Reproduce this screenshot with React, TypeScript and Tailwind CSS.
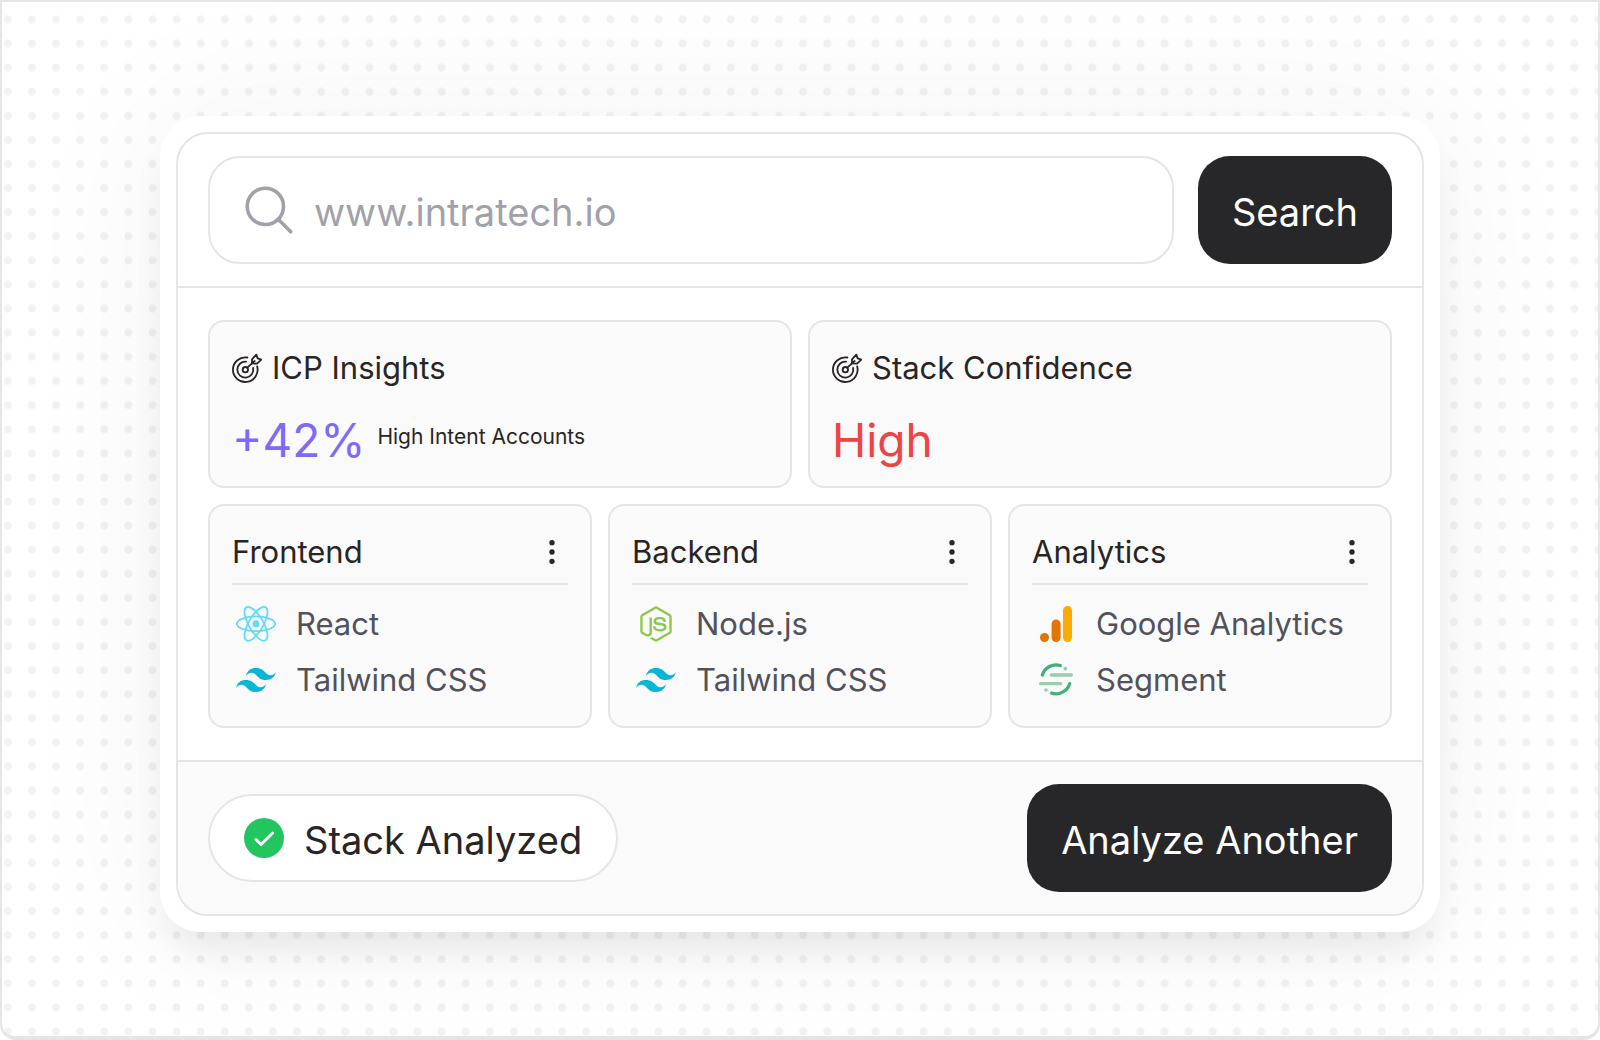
import React from 'react';
import { EllipsisVertical } from 'lucide-react';
import { FaNodeJs } from 'react-icons/fa';
import { SiTailwindcss } from 'react-icons/si';

const SearchIcon = () => (
  <svg viewBox="0 0 24 24" fill="none" stroke="currentColor" strokeWidth="1.5" strokeLinecap="round" className="size-[58px] shrink-0 text-[#a1a1aa]" aria-hidden="true">
    <circle cx="10.5" cy="10.5" r="7.5" />
    <path d="m21 21-5.2-5.2" />
  </svg>
);

const TargetIcon = () => (
  <svg viewBox="0 0 90 90" fill="none" stroke="currentColor" strokeWidth="5.5" strokeLinecap="round" strokeLinejoin="round" className="size-[30px] shrink-0" aria-hidden="true">
    <path d="M46 13.5A37 37 0 1 0 75.5 40" />
    <path d="M42 26A24 24 0 1 0 63.5 45" />
    <circle cx="40" cy="50" r="8" />
    <path d="M46 44 60 31" />
    <path d="M60 31V19L73 5l4 11 11 4-13 12Z" />
    <path d="m60 31 8-7" />
  </svg>
);

const ReactLogo = () => (
  <svg viewBox="-11.5 -10.23 23 20.46" className="w-10" aria-hidden="true">
    <circle r="2.05" fill="#61dafb" />
    <g stroke="#61dafb" fill="none">
      <ellipse rx="11" ry="4.2" />
      <ellipse rx="11" ry="4.2" transform="rotate(60)" />
      <ellipse rx="11" ry="4.2" transform="rotate(120)" />
    </g>
  </svg>
);

const GoogleAnalyticsLogo = () => (
  <svg viewBox="0 0 32 36" className="h-9" aria-hidden="true">
    <rect x="23" width="9" height="36" rx="4.5" fill="#f9ab00" />
    <rect x="11.6" y="13.4" width="9" height="22.6" rx="4.5" fill="#e37400" />
    <circle cx="4.5" cy="31.5" r="4.5" fill="#e37400" />
  </svg>
);

const SegmentLogo = () => (
  <svg viewBox="0 0 120 120" fill="none" strokeWidth="10" strokeLinecap="round" className="size-10" aria-hidden="true">
    <path d="M19 45A43.5 43.5 0 0 1 73 16.5" stroke="#43af79" />
    <path d="M101 71A43.5 43.5 0 0 1 47 99.5" stroke="#43af79" />
    <path d="M46 45h60M14 71h60" stroke="#99cdab" />
    <circle cx="88" cy="26" r="5.5" fill="#99cdab" />
    <circle cx="30" cy="90" r="5.5" fill="#99cdab" />
  </svg>
);

const CheckBadge = () => (
  <svg viewBox="0 0 40 40" fill="none" className="size-10 shrink-0" aria-hidden="true">
    <circle cx="20" cy="20" r="20" fill="#22c55e" />
    <path d="m12 21.5 5 5L28.5 15" stroke="#fff" strokeWidth="3" strokeLinecap="round" strokeLinejoin="round" />
  </svg>
);

const TailwindLogo = () => <SiTailwindcss className="size-10 text-[#06b6d4]" />;
const NodeLogo = () => <FaNodeJs className="size-9 text-[#8cc84b]" />;

const STACKS = [
  {
    title: 'Frontend',
    items: [
      { name: 'React', Logo: ReactLogo },
      { name: 'Tailwind CSS', Logo: TailwindLogo },
    ],
  },
  {
    title: 'Backend',
    items: [
      { name: 'Node.js', Logo: NodeLogo },
      { name: 'Tailwind CSS', Logo: TailwindLogo },
    ],
  },
  {
    title: 'Analytics',
    items: [
      { name: 'Google Analytics', Logo: GoogleAnalyticsLogo },
      { name: 'Segment', Logo: SegmentLogo },
    ],
  },
];

const DotGrid = () => (
  <svg className="absolute inset-0 size-full" aria-hidden="true">
    <defs>
      <pattern id="dots" x="-6.2" y="5.3" width="24.1" height="24.1" patternUnits="userSpaceOnUse">
        <circle cx="12.05" cy="12.05" r="4" fill="#f2f2f2" />
      </pattern>
    </defs>
    <rect width="100%" height="100%" fill="url(#dots)" />
  </svg>
);

const InsightCard: React.FC<{ title: string; children: React.ReactNode }> = ({ title, children }) => (
  <section className="flex-1 rounded-2xl border-2 border-[#e5e5e5] bg-neutral-50 p-[22px]">
    <h2 className="flex items-center gap-2.5 text-[31px] leading-[48px]">
      <TargetIcon />
      {title}
    </h2>
    <div className="mt-6 flex items-start gap-3">{children}</div>
  </section>
);

const StackCard: React.FC<(typeof STACKS)[number]> = ({ title, items }) => (
  <section className="rounded-2xl border-2 border-[#e5e5e5] bg-neutral-50 p-[22px]">
    <div className="flex items-center justify-between border-b-2 border-[#e5e5e5] pb-[7px]">
      <h2 className="text-[31px] leading-[48px]">{title}</h2>
      <button type="button" aria-label={`${title} options`}>
        <EllipsisVertical size={32} />
      </button>
    </div>
    <ul className="mt-[15px] space-y-2 px-1 text-[31px] leading-[48px] text-[#52525b]">
      {items.map(({ name, Logo }) => (
        <li key={name} className="flex items-center gap-5 whitespace-nowrap">
          <span className="flex w-10 shrink-0 justify-center">
            <Logo />
          </span>
          {name}
        </li>
      ))}
    </ul>
  </section>
);

export default function App() {
  return (
    <div className="min-h-screen bg-white font-['Inter',sans-serif] text-[#292524]">
      <main className="relative min-h-screen overflow-hidden rounded-b-2xl border-2 border-b-4 border-[#e5e5e5] px-8 pt-[114px] pb-[104px]">
        <DotGrid />
        <div className="relative mx-auto max-w-7xl rounded-[40px] bg-white p-4 shadow-[0_0_160px_rgba(0,0,0,0.05),0_24px_36px_-8px_rgba(0,0,0,0.08)]">
          <div className="overflow-hidden rounded-[32px] border-2 border-[#e5e5e5]">
            <form className="flex gap-6 border-b-2 border-[#e5e5e5] px-[30px] py-[22px]" onSubmit={(e) => e.preventDefault()}>
              <label className="flex h-[108px] min-w-0 flex-1 items-center gap-4 rounded-[32px] border-2 border-[#e5e5e5] px-[30px]">
                <SearchIcon />
                <input
                  type="text"
                  aria-label="Website"
                  placeholder="www.intratech.io"
                  className="w-full min-w-0 bg-transparent pt-1 text-[38px] leading-[56px] outline-none placeholder:text-[#a1a1aa]"
                />
              </label>
              <button type="submit" className="h-[108px] rounded-[32px] bg-[#272729] px-[34px] pt-1 text-[38px] leading-[56px] text-white">
                Search
              </button>
            </form>

            <div className="flex flex-col gap-4 px-[30px] py-8">
              <div className="flex gap-4">
                <InsightCard title="ICP Insights">
                  <span className="text-[46px] leading-[48px] text-[#7f6af8]">+42%</span>
                  <span className="text-[21px] leading-[42px]">High Intent Accounts</span>
                </InsightCard>
                <InsightCard title="Stack Confidence">
                  <span className="text-[46px] leading-[48px] text-[#ef4444]">High</span>
                </InsightCard>
              </div>
              <div className="grid grid-cols-3 gap-4">
                {STACKS.map((stack) => (
                  <StackCard key={stack.title} {...stack} />
                ))}
              </div>
            </div>

            <footer className="flex items-center justify-between border-t-2 border-[#e5e5e5] bg-neutral-50 px-[30px] py-[22px]">
              <div className="flex h-[88px] items-center gap-5 rounded-full border-2 border-[#e5e5e5] bg-white px-[34px]">
                <CheckBadge />
                <span className="pt-1 text-[38px] leading-[56px]">Stack Analyzed</span>
              </div>
              <button type="button" className="h-[108px] rounded-[32px] bg-[#272729] px-[34px] pt-1 text-[38px] leading-[56px] text-white">
                Analyze Another
              </button>
            </footer>
          </div>
        </div>
      </main>
    </div>
  );
}
